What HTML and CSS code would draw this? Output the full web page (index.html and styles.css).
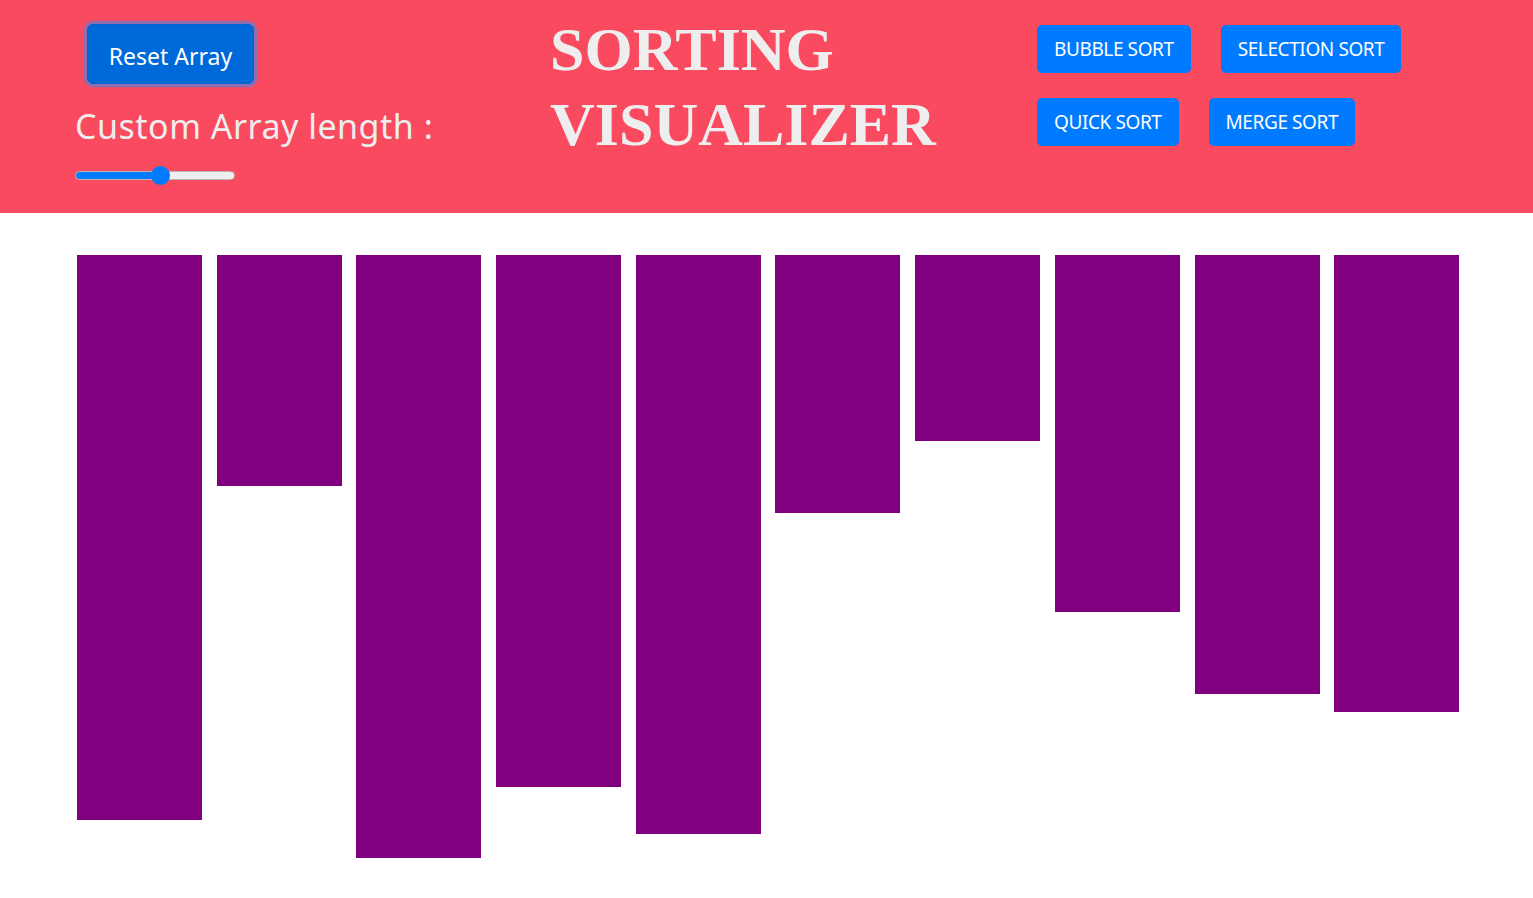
FILE: index.html
```html
<!DOCTYPE html>
<html>
<head>
<meta charset="utf-8">
<link rel="stylesheet" href="styles.css">
</head>
<body>
<header class="header">
  <div class="controls">
    <button class="btn btn-reset">Reset Array</button>
    <div class="length-label">Custom Array length :</div>
    <input class="slider" type="range" min="0" max="100" value="54">
  </div>
  <h1 class="title">SORTING<br>VISUALIZER</h1>
  <div class="algos">
    <div class="algo-row">
      <button class="btn btn-lg">BUBBLE SORT</button>
      <button class="btn btn-lg">SELECTION SORT</button>
    </div>
    <div class="algo-row">
      <button class="btn btn-lg">QUICK SORT</button>
      <button class="btn btn-lg">MERGE SORT</button>
    </div>
  </div>
</header>
<main class="bars">
  <div class="bar" style="height:565px"></div>
  <div class="bar" style="height:231px"></div>
  <div class="bar" style="height:603px"></div>
  <div class="bar" style="height:532px"></div>
  <div class="bar" style="height:579px"></div>
  <div class="bar" style="height:258px"></div>
  <div class="bar" style="height:186px"></div>
  <div class="bar" style="height:357px"></div>
  <div class="bar" style="height:439px"></div>
  <div class="bar" style="height:457px"></div>
</main>
</body>
</html>
```
FILE: styles.css
```css
* { box-sizing: border-box; }
html, body { margin: 0; padding: 0; }
body {
  font-family: "Noto Sans", "Open Sans", sans-serif;
  background: #fff;
  width: 1533px;
  height: 898px;
  overflow: hidden;
}
.header {
  height: 213px;
  background: #f94a5f;
  display: flex;
  align-items: flex-start;
}
.controls {
  width: 550px;
  padding: 24px 0 0 75px;
  display: flex;
  flex-direction: column;
  align-items: flex-start;
}
.btn {
  font-family: inherit;
  color: #fff;
  background: #007bff;
  border: 1px solid #007bff;
  border-radius: 4.8px;
  cursor: pointer;
}
.btn-reset {
  margin-left: 12px;
  width: 167px;
  height: 60px;
  font-size: 23px;
  background: #0069d9;
  border-color: #0062cc;
  border-radius: 6px;
  box-shadow: 0 0 0 3.2px rgba(38, 143, 255, 0.5);
  padding: 3px 0 0 0;
}
.length-label {
  margin-top: 17px;
  font-size: 34px;
  line-height: 50px;
  color: #eeeeee;
  font-weight: 400;
  letter-spacing: 0.5px;
}
.slider {
  -webkit-appearance: none;
  appearance: none;
  display: block;
  margin: 20px 0 0 0;
  width: 160px;
  height: 9px;
  border-radius: 5px;
  border: 1px solid #b5b5b5;
  background: linear-gradient(to right, #007bff 0, #007bff 85px, #efefef 85px);
  outline: none;
}
.slider::-webkit-slider-thumb {
  -webkit-appearance: none;
  width: 19px;
  height: 19px;
  border-radius: 50%;
  background: #007bff;
  border: none;
}
.title {
  margin: 12px 0 0 0;
  width: 487px;
  font-family: "Liberation Serif", "Times New Roman", serif;
  font-weight: bold;
  font-size: 62px;
  line-height: 75px;
  color: #eeeeee;
}
.algos {
  padding-top: 25px;
  display: flex;
  flex-direction: column;
  gap: 25px;
}
.algo-row {
  display: flex;
  gap: 30px;
}
.btn-lg {
  font-size: 19px;
  height: 48px;
  padding: 0 16px;
  letter-spacing: -0.4px;
}
.bars {
  display: flex;
  align-items: flex-start;
  gap: 14.7px;
  padding: 42px 0 0 77px;
}
.bar {
  width: 125px;
  background: #800080;
  flex: none;
}
```
